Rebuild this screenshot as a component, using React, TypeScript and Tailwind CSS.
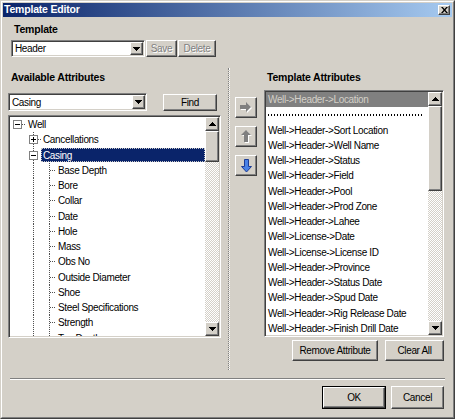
import React from "react";

const raised =
  "border border-t-white border-l-white border-r-[#404040] border-b-[#404040] shadow-[inset_-1px_-1px_0_#808080]";
const sunken =
  "border border-t-[#808080] border-l-[#808080] border-r-white border-b-white shadow-[inset_1px_1px_0_#404040,inset_-1px_-1px_0_#d4d0c8]";
const checker =
  "bg-[image:repeating-conic-gradient(#ffffff_0_25%,#d4d0c8_0_50%)] bg-[length:2px_2px]";
const label = "h-[14px] whitespace-nowrap text-[10.5px] leading-[14px] font-bold tracking-[-0.2px]";

function TriDown() {
  return (
    <svg width="7" height="4" className="block">
      <path d="M0 0h7v1h-1v1h-1v1h-1v1h-1v-1h-1v-1h-1v-1H0z" fill="#000" />
    </svg>
  );
}

function TriUp() {
  return (
    <svg width="7" height="4" className="block">
      <path d="M3 0h1v1h1v1h1v1h1v1H0v-1h1v-1h1v-1h1z" fill="#000" />
    </svg>
  );
}

function ScrollBar({ thumb }: { thumb: string }) {
  return (
    <div className="flex w-[14px] shrink-0 flex-col self-stretch">
      <div className={`${raised} flex h-[14px] shrink-0 items-center justify-center bg-[#d4d0c8]`}>
        <TriUp />
      </div>
      <div className={`${raised} shrink-0 bg-[#d4d0c8] ${thumb}`} />
      <div className={`flex-1 ${checker}`} />
      <div className={`${raised} flex h-[14px] shrink-0 items-center justify-center bg-[#d4d0c8]`}>
        <TriDown />
      </div>
    </div>
  );
}

function Combo({ text, className }: { text: string; className: string }) {
  return (
    <div className={`${sunken} flex bg-white p-px ${className}`}>
      <div className="flex flex-1 items-center pl-[2px] whitespace-nowrap">{text}</div>
      <div className={`${raised} flex w-[13px] items-center justify-center bg-[#d4d0c8]`}>
        <TriDown />
      </div>
    </div>
  );
}

function Btn({
  children,
  className,
  disabled,
}: {
  children?: React.ReactNode;
  className: string;
  disabled?: boolean;
}) {
  return (
    <button
      type="button"
      className={`${raised} flex shrink-0 items-center justify-center bg-[#d4d0c8] whitespace-nowrap ${
        disabled ? "text-[#808080] [text-shadow:1px_1px_0_#ffffff]" : "text-black"
      } ${className}`}
    >
      {children}
    </button>
  );
}

function ExpBox({ x, open }: { x: number; open: boolean }) {
  return (
    <g>
      <rect x={x + 0.5} y={3.5} width={8} height={8} fill="#fff" stroke="#808080" />
      <line x1={x + 2} x2={x + 7} y1={7.5} y2={7.5} stroke="#000" />
      {!open && <line x1={x + 4.5} x2={x + 4.5} y1={5} y2={10} stroke="#000" />}
    </g>
  );
}

const dot = { stroke: "#505050", strokeDasharray: "1 1" };

// casing children, last one is scrolled half out of view
const children = [
  "Base Depth",
  "Bore",
  "Collar",
  "Date",
  "Hole",
  "Mass",
  "Obs No",
  "Outside Diameter",
  "Shoe",
  "Steel Specifications",
  "Strength",
  "Top Depth",
];

const attrs = [
  "Well->Header->Sort Location",
  "Well->Header->Well Name",
  "Well->Header->Status",
  "Well->Header->Field",
  "Well->Header->Pool",
  "Well->Header->Prod Zone",
  "Well->Header->Lahee",
  "Well->License->Date",
  "Well->License->License ID",
  "Well->Header->Province",
  "Well->Header->Status Date",
  "Well->Header->Spud Date",
  "Well->Header->Rig Release Date",
  "Well->Header->Finish Drill Date",
];

function Tree() {
  return (
    <div className={`${sunken} mt-[4px] flex h-[223px] bg-white p-px`}>
      <div className="flex-1 overflow-hidden">
        <div className="flex h-[15.25px] items-center whitespace-nowrap">
          <svg width="16" height="100%" className="block shrink-0">
            <ExpBox x={3} open />
            <line x1={12} x2={16} y1={7.5} y2={7.5} {...dot} />
          </svg>
          <span className="pl-[2px]">Well</span>
        </div>
        <div className="flex h-[15.25px] items-center whitespace-nowrap">
          <svg width="31" height="100%" className="block shrink-0">
            <line x1={23.5} x2={23.5} y1={0} y2={16} {...dot} />
            <ExpBox x={19} open={false} />
            <line x1={28} x2={31} y1={7.5} y2={7.5} {...dot} />
          </svg>
          <span className="pl-[2px]">Cancellations</span>
        </div>
        <div className="flex h-[15.25px] items-center whitespace-nowrap">
          <svg width="31" height="100%" className="block shrink-0">
            <line x1={23.5} x2={23.5} y1={0} y2={16} {...dot} />
            <ExpBox x={19} open />
          </svg>
          <span className="flex h-[14px] flex-1 items-center border border-dotted border-[#c8c8c8] bg-[#0a246a] pl-px text-white">
            Casing
          </span>
        </div>
        {children.map((c) => (
          <div key={c} className="flex h-[15.25px] items-center whitespace-nowrap">
            <svg width="46" height="100%" className="block shrink-0">
              <line x1={23.5} x2={23.5} y1={0} y2={16} {...dot} />
              <line x1={39.5} x2={39.5} y1={0} y2={16} {...dot} />
              <line x1={40} x2={46} y1={7.5} y2={7.5} {...dot} />
            </svg>
            <span className="pl-[2px]">{c}</span>
          </div>
        ))}
      </div>
      <ScrollBar thumb="h-[31px]" />
    </div>
  );
}

function AttrList() {
  return (
    <div className={`${sunken} mt-[6px] flex h-[247px] bg-white p-px`}>
      <div className="flex-1 overflow-hidden">
        <div className="flex h-[15.25px] items-center bg-[#808080] pl-[2px] whitespace-nowrap text-[#d4d0c8]">
          Well-&gt;Header-&gt;Location
        </div>
        <div className="flex h-[15.25px] items-center px-[2px]">
          <div className="h-[2px] w-[155px] bg-[image:repeating-linear-gradient(90deg,#000000_0_1px,transparent_1px_3px)]" />
        </div>
        {attrs.map((a) => (
          <div key={a} className="flex h-[15.25px] items-center pl-[2px] whitespace-nowrap">
            {a}
          </div>
        ))}
      </div>
      <ScrollBar thumb="h-[85px]" />
    </div>
  );
}

function ArrowRight() {
  return (
    <svg width="13" height="11" className="block">
      <path d="M1 4H7V1L12 6L7 11V8H1Z" fill="#fff" />
      <path d="M0 3H6V0L11 5L6 10V7H0Z" fill="#808080" />
    </svg>
  );
}

function ArrowUp() {
  return (
    <svg width="11" height="13" className="block">
      <path d="M6 1L11 6H8V13H4V6H1Z" fill="#fff" />
      <path d="M5 0L10 5H7V12H3V5H0Z" fill="#808080" />
    </svg>
  );
}

function ArrowDown() {
  return (
    <svg width="11" height="14" className="block">
      <path d="M3.5 0.5H7.5V7.5H10.5L5.5 13L0.5 7.5H3.5Z" fill="#4a82e6" stroke="#1c3c96" />
    </svg>
  );
}

export default function App() {
  return (
    <div className="font-['Liberation_Sans',Arial,sans-serif] text-[10px] tracking-[-0.35px] text-black">
      <div className="flex h-[419px] w-[455px] flex-col border border-t-[#d4d0c8] border-l-[#d4d0c8] border-r-[#404040] border-b-[#404040] bg-[#d4d0c8]">
        <div className="flex flex-1 flex-col border border-t-white border-l-white border-r-[#808080] border-b-[#808080] p-px">
          {/* title bar */}
          <div className="flex h-[14px] shrink-0 items-center justify-between bg-[image:linear-gradient(to_right,#0a246a,#a6caf0)] pr-[2px] pl-[1px]">
            <span className="text-[10.5px] font-bold tracking-[-0.2px] text-white">Template Editor</span>
            <button type="button" className={`${raised} flex h-[10px] w-[12px] items-center justify-center bg-[#d4d0c8]`}>
              <svg width="7" height="6" className="block">
                <path d="M0 0h1.8L3.5 2 5.2 0H7L4.4 3 7 6H5.2L3.5 4 1.8 6H0L2.6 3z" fill="#000" />
              </svg>
            </button>
          </div>

          {/* template */}
          <div className={`mt-[5px] pl-[11px] ${label}`}>Template</div>
          <div className="mt-[4px] flex pl-[8px]">
            <Combo text="Header" className="h-[17px] w-[134px]" />
            <Btn disabled className="ml-px h-[17px] w-[31px]">
              Save
            </Btn>
            <Btn disabled className="ml-px h-[17px] w-[38px]">
              Delete
            </Btn>
          </div>

          {/* main */}
          <div className="mt-[9px] flex h-[306px] pl-[5px]">
            <div className="flex w-[213px] flex-col pt-[4px]">
              <div className={`pl-[3px] ${label}`}>Available Attributes</div>
              <div className="mt-[9px] flex items-start">
                <Combo text="Casing" className="h-[18px] w-[139px]" />
                <Btn className="mt-px ml-[16px] h-[17px] w-[54px]">Find</Btn>
              </div>
              <Tree />
            </div>

            <div className="my-[2px] ml-[7px] w-[2px] border-x border-dotted border-l-[#808080] border-r-white" />

            <div className="ml-[5px] flex w-[22px] flex-col gap-[8px] pt-[31px]">
              <Btn className="h-[21px] w-[22px]">
                <ArrowRight />
              </Btn>
              <Btn className="h-[21px] w-[22px]">
                <ArrowUp />
              </Btn>
              <Btn className="h-[21px] w-[22px]">
                <ArrowDown />
              </Btn>
            </div>

            <div className="ml-[7px] flex w-[180px] flex-col pt-[4px]">
              <div className={`pl-[3px] ${label}`}>Template Attributes</div>
              <AttrList />
              <div className="mt-[3px] flex justify-end gap-[7px]">
                <Btn className="h-[21px] w-[86px]">Remove Attribute</Btn>
                <Btn className="h-[21px] w-[59px]">Clear All</Btn>
              </div>
            </div>
          </div>

          {/* separator */}
          <div className="mt-[6px] ml-[7px] h-[2px] w-[435px] border-t border-b border-t-[#808080] border-b-white" />

          {/* footer */}
          <div className="mt-[6px] flex justify-end gap-[5px] pr-[8px]">
            <button type="button" className="h-[23px] w-[64px] border border-black p-0">
              <div className={`${raised} flex h-full w-full items-center justify-center bg-[#d4d0c8]`}>OK</div>
            </button>
            <Btn className="h-[23px] w-[53px]">Cancel</Btn>
          </div>
        </div>
      </div>
    </div>
  );
}
